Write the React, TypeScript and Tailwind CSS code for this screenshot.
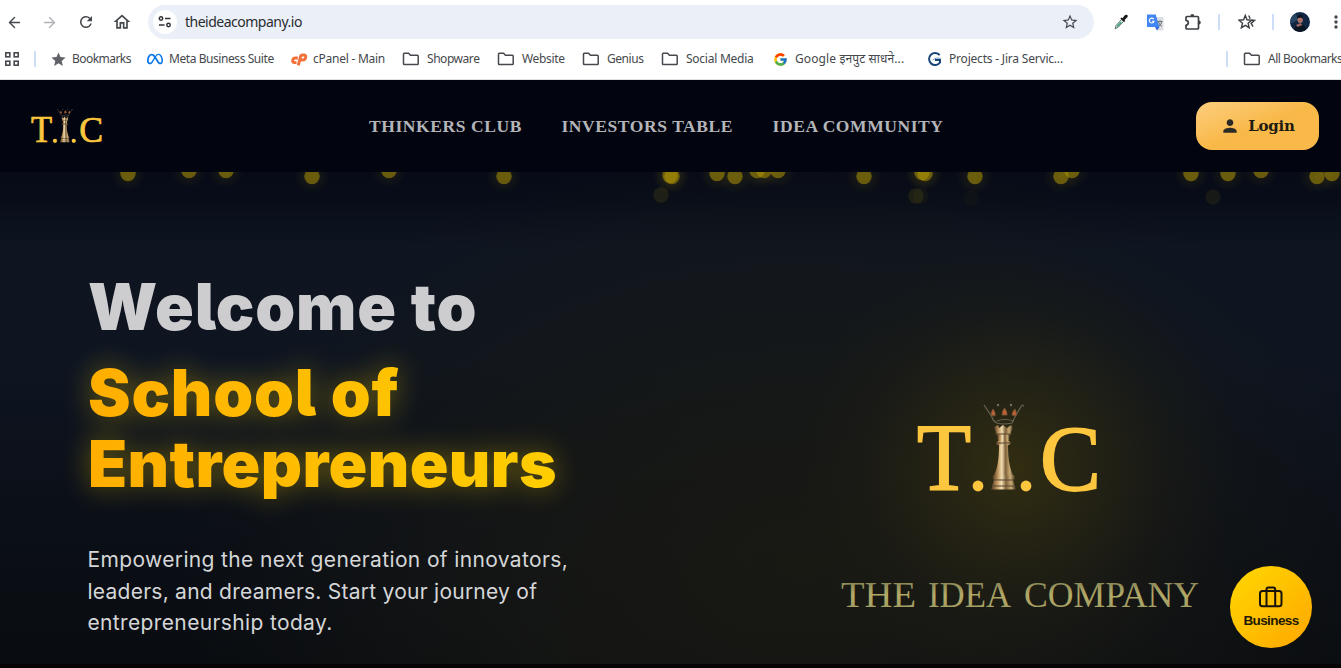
import React from "react";
import { ArrowLeft, ArrowRight } from "lucide-react";
import { MdPerson, MdStar, MdStarBorder, MdMoreVert, MdOutlineHome, MdRefresh } from "react-icons/md";
import { SiMeta } from "react-icons/si";
import { FcGoogle } from "react-icons/fc";

const Folder = () => (
  <svg width="18" height="16" viewBox="0 0 18 16" fill="none" stroke="#46494d" strokeWidth="1.5" className="shrink-0">
    <path d="M2.300 2.300h4.300l1.800 2h7q.8 0 .8.8v7.600q0 .8-.8.8H2.300q-.8 0-.8-.8V3.100q0-.8.8-.8z" />
  </svg>
);

const TuneIcon = () => (
  <svg width="14" height="14" viewBox="0 0 14 14" fill="none" stroke="#303236" strokeWidth="1.5">
    <circle cx="3" cy="3.500" r="1.700" />
    <path d="M7 3.500h5.500M1 10h5.500" />
    <circle cx="10.500" cy="10" r="1.700" />
  </svg>
);

const AppsIcon = () => (
  <svg width="14" height="14" viewBox="0 0 14 14" fill="none" stroke="#46494d" strokeWidth="1.6" className="shrink-0">
    <rect x="0.800" y="0.800" width="4" height="4" />
    <rect x="9.200" y="0.800" width="4" height="4" />
    <rect x="0.800" y="9.200" width="4" height="4" />
    <rect x="9.200" y="9.200" width="4" height="4" />
  </svg>
);

const CpanelIcon = () => (
  <svg width="17" height="13" viewBox="0 0 17 13" fill="none" stroke="#f2703a" strokeWidth="2.900">
    <path d="M6.800 5H4.300Q2.200 5 1.700 7.300 1.300 9.600 3.600 9.600H5.500" />
    <path d="M7.300 12.300 9.500 3.600Q9.900 2 11.600 2h1.200q2.400 0 1.900 2.500-.5 2.500-3 2.500H10" />
  </svg>
);

const Dropper = () => (
  <svg width="14" height="16" viewBox="0 0 14 16">
    <path d="M1.200 14.800 2 11.500 7.600 5.400l2 1.900-5.500 6z" fill="#d7e6df" stroke="#54645d" strokeWidth="0.900" />
    <path d="m2.500 12 4-4.200 1.300 1.100-4 4z" fill="#47a58c" />
    <path d="m6.300 4.500 1.200-1 1 .7L10.800 1.300c2.200-1.700 4 .3 2.300 2.300L10.500 6l.8 1.100-1.100 1z" fill="#171717" />
  </svg>
);

const TranslateIcon = () => (
  <svg width="17" height="17" viewBox="0 0 17 17">
    <path d="M6 3h10.500v13.500H10z" fill="#dcdee2" />
    <path d="M0 0.500h8.700L12.500 13H0z" fill="#4285f4" />
    <path d="m8 13 4.500 0L10 16.500z" fill="#3367d6" />
    <path d="M6.700 5.200A2.400 2.400 0 1 0 7 7.300H4.900" fill="none" stroke="#fff" strokeWidth="1.100" />
    <path d="M10.500 7.500h5M13 6.300v1.200M11.500 8q1.200 3.500 3.500 4.500M14.700 8q-.7 2.500-2.700 4" fill="none" stroke="#70757a" strokeWidth="1" />
  </svg>
);

const PuzzleIcon = () => (
  <svg width="18" height="18" viewBox="0 0 18 18">
    <path
      d="M3 3.500h10.500q1 0 1 1v10.500q0 1-1 1H3q-1 0-1-1V12.300q2.300-.4 2.300-2.500T2 7.300V4.500q0-1 1-1z"
      fill="none"
      stroke="#3d4043"
      strokeWidth="1.700"
      strokeLinejoin="round"
    />
    <path d="M6.400 3.300a1.900 2.200 0 0 1 3.800 0zM14.800 7.600a2 2 0 0 1 0 4z" fill="#3d4043" />
  </svg>
);

const StarsIcon = () => (
  <svg width="18" height="18" viewBox="0 0 18 18" fill="none" stroke="#3d4043" strokeWidth="1.400">
    <path d="M7.300 2.500 9 6.800l4.600.4-3.500 3 1.100 4.500-3.900-2.400-3.900 2.400 1.100-4.500L1 7.200l4.600-.4z" />
    <path d="m10.800 2.500 1.300 3.300M13.400 7.200l3.200.1-3.500 3.100 2 3.300" />
  </svg>
);

const GeniusIcon = () => (
  <svg width="15" height="15" viewBox="0 0 15 15" fill="none">
    <path d="M12.700 3.200A6 6 0 1 0 13 10.500V8H8" stroke="#174779" strokeWidth="2" />
    <path d="M5.500 8q3-2.800 8.300-1.700" stroke="#7b9fc0" strokeWidth="1" />
  </svg>
);

const Avatar = () => (
  <svg width="20" height="20" viewBox="0 0 20 20">
    <defs>
      <clipPath id="avatar"><circle cx="10" cy="10" r="10" /></clipPath>
    </defs>
    <g clipPath="url(#avatar)">
      <rect width="20" height="20" fill="#102642" />
      <path d="M0 5 6 2l2 6-8 4z" fill="#284664" />
      <path d="m3 20 3-7 4-2 5 3 2 6z" fill="#0a1524" />
      <ellipse cx="10.200" cy="7.600" rx="2.700" ry="3.500" fill="#aa7265" />
      <path d="M7 6.300Q8 2 12.200 3.500L13 7l-2-1.500z" fill="#080f1c" />
      <path d="m6 13 4.500-2 2 2-5 2z" fill="#9d6464" />
    </g>
  </svg>
);

const Logo = ({ className }: { className: string }) => (
  <svg viewBox="0 0 186 92" className={`overflow-visible ${className}`}>
    <defs>
      <linearGradient id="piece" x1="0" x2="1">
        <stop offset="0" stopColor="#4a3520" />
        <stop offset="0.250" stopColor="#c49a62" />
        <stop offset="0.420" stopColor="#f2dfb5" />
        <stop offset="0.600" stopColor="#80613b" />
        <stop offset="0.800" stopColor="#c8ab76" />
        <stop offset="1" stopColor="#42311f" />
      </linearGradient>
    </defs>
    <g fill="#fdc63f" fontFamily="Liberation Serif, serif">
      <g stroke="#fdc63f" strokeWidth="1.800">
        <text x="0" y="87.500" fontSize="95" textLength="54" lengthAdjust="spacingAndGlyphs">T</text>
        <text x="123" y="87.500" fontSize="94" textLength="61" lengthAdjust="spacingAndGlyphs">C</text>
      </g>
      <circle cx="61" cy="84" r="5.400" />
      <circle cx="109" cy="84" r="5.400" />
    </g>
    <g fill="url(#piece)">
      <path d="M77 25l4-2 1 3 4-3 4 3 4-3 2 2-3 8H80z" />
      <path d="M80 32h13l-1 7H81z" />
      <rect x="79" y="39" width="15" height="4" rx="2" />
      <path d="M82 43h9q0 23 6 31H76q6-8 6-31z" />
      <rect x="75.500" y="73" width="22.500" height="5" rx="2.500" />
      <path d="M77 78h19l3 9.500H74z" />
    </g>
    <g fill="none" stroke="#584831" strokeWidth="1">
      <path d="M78 32h17M79 41h15M76 78h21M75 84h23" />
    </g>
    <path d="M67 3l8 12q1 4 5 6 6 2 15 0l4-8 6-10M80 19q7-3 17 0" fill="none" stroke="#6a6252" strokeWidth="1.200" />
    <path d="M74 13q0-3 2-6 3 4 2 7zM85 13q0-4 2.500-7 3 4 2.500 7zM95 13q0-3 3-6 2 4 1 7z" fill="#bd6135" stroke="#795638" strokeWidth="0.800" />
    <circle cx="81" cy="3" r="1.200" fill="#777064" />
    <circle cx="94" cy="3" r="1.200" fill="#777064" />
    <circle cx="106" cy="3.500" r="1" fill="#625e55" />
  </svg>
);

const Suitcase = () => (
  <svg width="24" height="22" viewBox="0 0 24 22" fill="none" stroke="#171308" strokeWidth="2">
    <rect x="1" y="5" width="21.500" height="15.200" rx="2.500" />
    <path d="M7.500 20V3.500q0-2 2-2h4.700q2 0 2 2V20" />
  </svg>
);

const bookmarks = [
  { label: "Bookmarks", width: "w-[97px]", gap: "w-[22px]", icon: <MdStar size={17} color="#5f6368" />, tracking: "tracking-[-0.550px]" },
  { label: "Meta Business Suite", width: "w-[144px]", gap: "w-[22px]", icon: <SiMeta size={16} color="#0878e8" />, tracking: "tracking-[-0.430px]" },
  { label: "cPanel - Main", width: "w-[111px]", gap: "w-[22px]", icon: <CpanelIcon />, tracking: "tracking-[-0.250px]" },
  { label: "Shopware", width: "w-[95px]", gap: "w-[25px]", icon: <Folder />, tracking: "tracking-[-0.450px]" },
  { label: "Website", width: "w-[85px]", gap: "w-[25px]", icon: <Folder />, tracking: "tracking-[-0.350px]" },
  { label: "Genius", width: "w-[79px]", gap: "w-[25px]", icon: <Folder />, tracking: "tracking-[-0.450px]" },
  { label: "Social Media", width: "w-[112px]", gap: "w-[25px]", icon: <Folder />, tracking: "tracking-[-0.250px]" },
  { label: "Google इनपुट साधने...", width: "w-[154px]", gap: "w-[22px]", icon: <FcGoogle size={15} />, tracking: "tracking-[0.120px]" },
  { label: "Projects - Jira Servic...", width: "w-[150px]", gap: "w-[22px]", icon: <GeniusIcon />, tracking: "tracking-[-0.200px]" },
];

const lights = [
  [128, 1], [189, -2], [226, -2], [312, 4], [389, -2], [504, 4], [670, 3], [672, 4], [717, 1], [735, 4],
  [757, -2], [764, -2], [778, -2], [864, 4], [922, 0], [925, 1], [975, 4], [1061, 4], [1072, -2], [1191, 1],
  [1228, 1], [1261, -2], [1317, 4], [1332, 1],
];
const dimLights = [[661, 23, 0.14], [916, 24, 0.14], [921, 24, 0.06], [971, 26, 0.04], [1213, 25, 0.1]];

function BrowserBar() {
  return (
    <div className="h-20 overflow-hidden border-b border-[#dfe1e3] bg-white font-['Noto_Sans',sans-serif] text-[#45484c]">
      <div className="flex h-[44px] items-center pl-[6px] *:shrink-0">
        <ArrowLeft size={17} strokeWidth={2} />
        <ArrowRight size={17} strokeWidth={2} className="ml-[18px] text-[#b0b2b5]" />
        <MdRefresh size={18} className="ml-[19px]" />
        <MdOutlineHome size={20} className="ml-[17px]" />
        <div className="ml-[16px] flex h-[34px] w-[946px] items-center rounded-full bg-[#ebf0f8] pl-[5px] pr-[15px]">
          <span className="flex size-6 items-center justify-center rounded-full bg-white"><TuneIcon /></span>
          <span className="ml-2 text-[14px] leading-5 tracking-[-0.500px] text-[#2a2c2f]">theideacompany.io</span>
          <MdStarBorder size={18} className="ml-auto" />
        </div>
        <div className="ml-[20px]"><Dropper /></div>
        <div className="ml-[19px]"><TranslateIcon /></div>
        <div className="ml-[20px]"><PuzzleIcon /></div>
        <div className="ml-[16px] h-4 w-[2px] bg-[#cfdef8]" />
        <div className="ml-[18px]"><StarsIcon /></div>
        <div className="ml-[16px] h-4 w-[2px] bg-[#cfdef8]" />
        <div className="ml-[16px]"><Avatar /></div>
        <MdMoreVert size={20} className="ml-[16px]" />
      </div>
      <div className="flex h-[30px] items-center pl-[5px] text-[12px]">
        <AppsIcon />
        <div className="ml-[15px] h-4 w-[2px] shrink-0 bg-[#cfdef8]" />
        <div className="ml-[14px] flex shrink-0">
          {bookmarks.map((b) => (
            <div key={b.label} className={`flex shrink-0 items-center whitespace-nowrap ${b.width}`}>
              <span className={`flex shrink-0 items-center ${b.gap}`}>{b.icon}</span>
              <span className={b.tracking}>{b.label}</span>
            </div>
          ))}
        </div>
        <div className="ml-[149px] h-4 w-[2px] shrink-0 bg-[#cfdef8]" />
        <div className="ml-[15px] flex shrink-0 items-center gap-[7px] whitespace-nowrap tracking-[-0.500px]"><Folder />All Bookmarks</div>
      </div>
    </div>
  );
}

export default function App() {
  return (
    <div className="flex h-[668px] w-[1341px] flex-col overflow-hidden bg-black">
      <BrowserBar />
      <header className="flex h-[92px] shrink-0 items-center bg-[#020510] pl-[31px] pr-[22px]">
        <Logo className="h-[36px] w-[73px]" />
        <nav className="ml-[265px] flex flex-1 gap-[39.500px] whitespace-nowrap font-['Liberation_Serif',serif] text-[17.500px] font-bold tracking-[0.580px] text-[#b4b5b9]">
          <span>THINKERS CLUB</span>
          <span>INVESTORS TABLE</span>
          <span>IDEA COMMUNITY</span>
        </nav>
        <button className="flex h-12 w-[123px] items-center justify-center gap-2 rounded-2xl bg-linear-to-br from-[#fcce7d] via-[#f9b949] to-[#f9b849] font-['DejaVu_Serif',serif] text-[15px] font-bold tracking-[-0.200px] text-[#211b12]">
          <MdPerson size={20} color="#2c2a27" />
          Login
        </button>
      </header>
      <main className="relative h-[492px] shrink-0 overflow-hidden bg-[linear-gradient(180deg,#070b17_0px,#070c18_24px,#0e1521_75px,#0e1521_190px,#0b0f17_350px,#090c10_492px)]">
        <div className="absolute inset-0 bg-[radial-gradient(ellipse_620px_420px_at_800px_390px,#1a1a13e6_0%,#181915b3_45%,transparent_100%)]" />
        <div className="absolute inset-0 bg-[radial-gradient(circle_220px_at_1015px_295px,#393310cc_0%,#302c1299_32%,#201f1555_70%,transparent_100%)]" />
        <svg width="1341" height="60" viewBox="0 0 1341 60" className="absolute inset-x-0 top-0">
          <defs>
            <radialGradient id="halo"><stop stopColor="#8d7708" stopOpacity="0.180" /><stop offset="1" stopColor="#8d7708" stopOpacity="0" /></radialGradient>
          </defs>
          {lights.map(([x, y], i) => (
            <g key={i}>
              <circle cx={x} cy={y} r="18" fill="url(#halo)" />
              <circle cx={x} cy={y + 0.5} r="7.700" fill="#b49a05" fillOpacity="0.520" />
            </g>
          ))}
          {dimLights.map(([x, y, opacity]) => (
            <circle key={x} cx={x} cy={y} r="7.700" fill="#a0900c" fillOpacity={opacity} />
          ))}
        </svg>
        <div className="relative flex h-full">
          <section className="w-[750px] pl-[88px] pt-[99px] font-['Inter',sans-serif]">
            <h1 className="whitespace-nowrap text-[64px] font-black leading-[71px] [font-feature-settings:'cv05']">
              <span className="block h-[86px] tracking-[0.900px] text-[#cdcdcf]">Welcome to</span>
              <span className="block w-[504px] bg-linear-to-r from-[#ffae00] to-[#ffd000] bg-clip-text text-transparent drop-shadow-[0_0_14px_#ffd50066]">
                <span className="tracking-[0.800px]">School of</span><br />
                <span className="tracking-[0.370px]">Entrepreneurs</span>
              </span>
            </h1>
            <p className="ml-[-0.500px] mt-[45px] whitespace-nowrap text-[21px] leading-[31.500px] tracking-[0.360px] text-[#d5d6d8]">
              Empowering the next generation of innovators,<br />
              <span className="tracking-[0.250px]">leaders, and dreamers. Start your journey of</span><br />
              entrepreneurship today.
            </p>
          </section>
          <section className="flex flex-1 flex-col pl-[91px] pt-[230px]">
            <Logo className="ml-[76px] h-[92px] w-[186px]" />
            <svg width="360" height="40" viewBox="0 0 360 40" className="mt-[82px] overflow-visible">
              <defs>
                <linearGradient id="company" x1="0" x2="0" y1="0" y2="1">
                  <stop stopColor="#777850" /><stop offset="0.500" stopColor="#b5aa67" /><stop offset="1" stopColor="#999760" />
                </linearGradient>
              </defs>
              <g fontFamily="Liberation Serif, serif" fontSize="35" fill="url(#company)">
                <text x="0" y="31" textLength="75" lengthAdjust="spacingAndGlyphs">THE</text>
                <text x="87" y="31" textLength="83" lengthAdjust="spacingAndGlyphs">IDEA</text>
                <text x="183" y="31" textLength="175" lengthAdjust="spacingAndGlyphs">COMPANY</text>
              </g>
            </svg>
          </section>
        </div>
        <button className="absolute left-[1230px] top-[394px] flex size-[82px] flex-col items-center gap-[4px] rounded-full bg-linear-to-br from-[#ffd900] to-[#ffa600] pt-[20px] font-['Liberation_Sans',sans-serif] text-[13.500px] font-bold leading-[18px] tracking-[-0.600px] text-[#211900]">
          <Suitcase />
          Business
        </button>
      </main>
      <div className="h-1 bg-[#050506]" />
    </div>
  );
}
